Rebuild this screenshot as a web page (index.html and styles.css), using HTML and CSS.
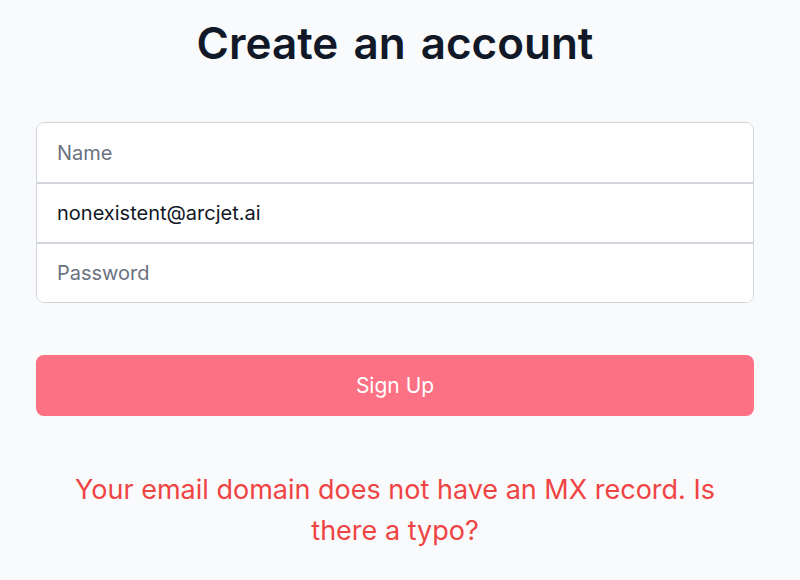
FILE: index.html
```html
<!DOCTYPE html>
<html lang="en">
<head>
<meta charset="utf-8">
<title>Create an account</title>
<link rel="stylesheet" href="styles.css">
</head>
<body>
<main class="page">
  <h1 class="title">Create an account</h1>
  <form class="form">
    <div class="fields">
      <input class="field" type="text" placeholder="Name">
      <input class="field" type="email" value="nonexistent@arcjet.ai">
      <input class="field" type="password" placeholder="Password">
    </div>
    <button class="submit" type="button">Sign Up</button>
  </form>
  <p class="error">Your email domain does not have an MX record. Is<br>there a typo?</p>
</main>
</body>
</html>
```

FILE: styles.css
```css
* { box-sizing: border-box; }
html, body { margin: 0; padding: 0; }
body {
  background: #f9fafb;
  font-family: Inter, "Noto Sans", sans-serif;
  color: #111827;
}
.page {
  padding: 0 46px 0 36px;
  width: 800px;
}
.title {
  margin: 0;
  padding-top: 18px;
  font-size: 44px;
  line-height: 50px;
  font-weight: 600;
  text-align: center;
  color: #111827;
  word-spacing: 4px;
}
.form {
  margin-top: 54px;
  display: flex;
  flex-direction: column;
}
.fields {
  display: flex;
  flex-direction: column;
  background: #fff;
  border: 1px solid #d1d5db;
  border-radius: 8px;
  overflow: hidden;
}
.field {
  height: 59px;
  border: 0;
  padding: 0 20px;
  font-family: inherit;
  font-size: 20px;
  color: #111827;
  background: #fff;
  outline: none;
}
.field + .field {
  height: 60px;
  border-top: 2px solid #d1d5db;
}
.field::placeholder { color: #6b7280; }
.submit {
  margin-top: 52px;
  height: 61px;
  border: 0;
  border-radius: 8px;
  background: #fd7185;
  color: #fff;
  font-family: inherit;
  font-size: 21px;
}
.error {
  margin: 53px 0 0;
  text-align: center;
  color: #ef4444;
  font-size: 27px;
  line-height: 41px;
}
```
